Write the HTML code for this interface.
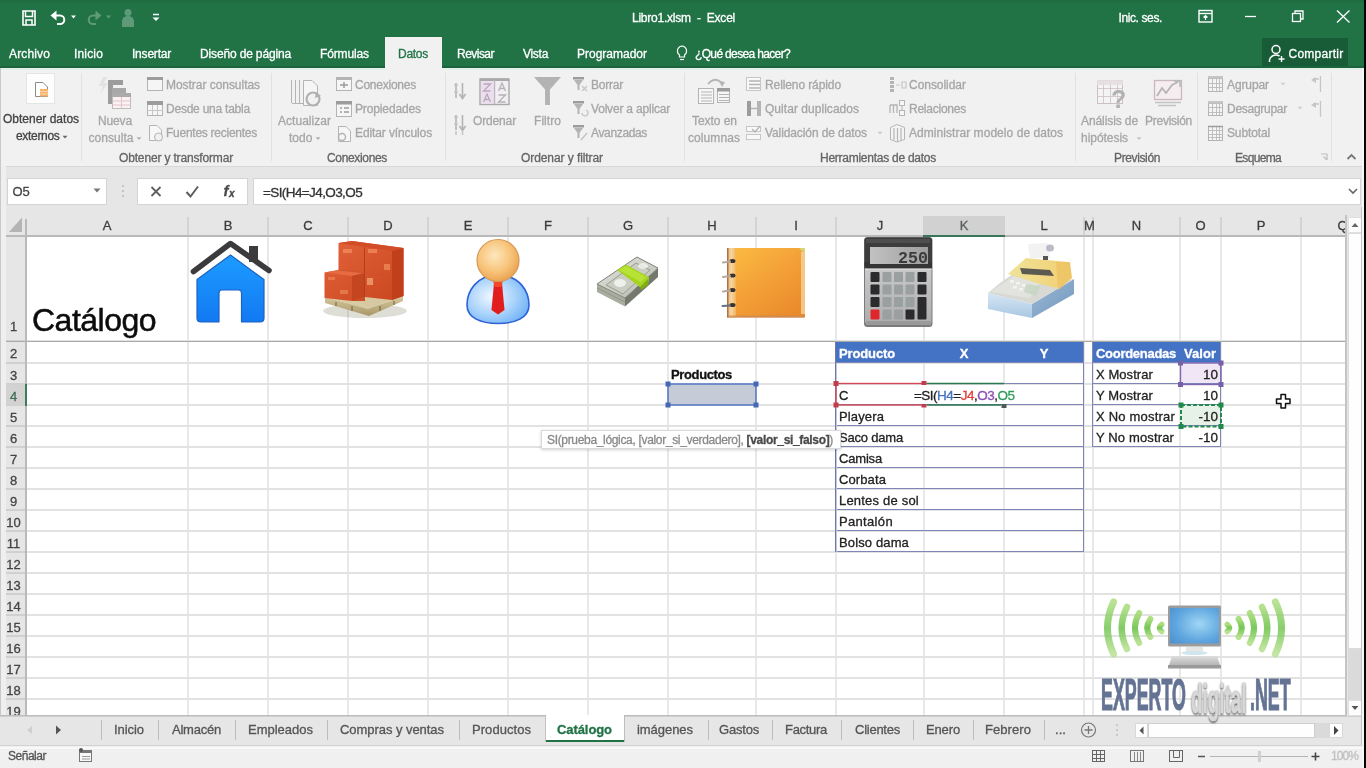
<!DOCTYPE html>
<html lang="es">
<head>
<meta charset="utf-8">
<title>Libro1.xlsm - Excel</title>
<style>
html,body{margin:0;padding:0;}
body{width:1366px;height:768px;overflow:hidden;background:#fff;position:relative;font-family:"Liberation Sans",sans-serif;}
#app{position:absolute;left:0;top:0;width:1366px;height:768px;overflow:hidden;will-change:transform;}
#app div{position:absolute;}
#app span.t{position:absolute;white-space:pre;-webkit-text-stroke:0.3px;line-height:20px;height:20px;}
#app svg{position:absolute;overflow:visible;}
</style>
</head>
<body>
<div id="app">
<div style="left:0px;top:0px;width:1366px;height:68px;background:#217346;"></div>
<div style="left:0px;top:0px;width:1366px;height:4px;background:linear-gradient(#1d6a3f,#217346);"></div>
<div style="left:385px;top:37px;width:57px;height:32px;background:#f1f1f1;"></div>
<div style="left:1262px;top:38px;width:86px;height:28px;background:#185c37;"></div>
<span class="t" style="font-size:12px;color:#fff;letter-spacing:-0.24px;top:7.6px;left:632.0px;">Libro1.xlsm  -  Excel</span>
<span class="t" style="font-size:12px;color:#fff;letter-spacing:-0.39px;top:7.6px;left:1118.5px;">Inic. ses.</span>
<span class="t" style="font-size:12px;color:#fff;letter-spacing:0.14px;top:44.1px;left:9.0px;">Archivo</span>
<span class="t" style="font-size:12px;color:#fff;letter-spacing:0.16px;top:44.1px;left:74.0px;">Inicio</span>
<span class="t" style="font-size:12px;color:#fff;letter-spacing:-0.21px;top:44.1px;left:132.0px;">Insertar</span>
<span class="t" style="font-size:12px;color:#fff;letter-spacing:-0.15px;top:44.1px;left:200.0px;">Diseño de página</span>
<span class="t" style="font-size:12px;color:#fff;letter-spacing:-0.13px;top:44.1px;left:320.0px;">Fórmulas</span>
<span class="t" style="font-size:12px;color:#217346;letter-spacing:-0.27px;top:44.1px;left:398.0px;">Datos</span>
<span class="t" style="font-size:12px;color:#fff;letter-spacing:-0.53px;top:44.1px;left:457.0px;">Revisar</span>
<span class="t" style="font-size:12px;color:#fff;letter-spacing:-0.29px;top:44.1px;left:523.0px;">Vista</span>
<span class="t" style="font-size:12px;color:#fff;letter-spacing:-0.00px;top:44.1px;left:577.0px;">Programador</span>
<span class="t" style="font-size:12px;color:#fff;letter-spacing:-0.65px;top:44.1px;left:695.0px;">¿Qué desea hacer?</span>
<span class="t" style="font-size:12px;color:#fff;letter-spacing:0.26px;top:44.1px;left:1288.5px;">Compartir</span>
<div style="left:0px;top:68px;width:1366px;height:98px;background:#f1f1f1;"></div>
<div style="left:0px;top:66px;width:1366px;height:2px;background:#1c653c;"></div>
<div style="left:385px;top:66px;width:57px;height:3px;background:#f1f1f1;"></div>
<div style="left:0px;top:68px;width:1366px;height:2px;background:#e4f1e8;"></div>
<div style="left:385px;top:68px;width:58px;height:2px;background:#f1f1f1;"></div>
<div style="left:0px;top:166px;width:1366px;height:1px;background:#d8d8d8;"></div>
<div style="left:81px;top:73px;width:1px;height:88px;background:#e1e1e1;"></div>
<div style="left:271px;top:73px;width:1px;height:88px;background:#e1e1e1;"></div>
<div style="left:445px;top:73px;width:1px;height:88px;background:#e1e1e1;"></div>
<div style="left:684px;top:73px;width:1px;height:88px;background:#e1e1e1;"></div>
<div style="left:1075px;top:73px;width:1px;height:88px;background:#e1e1e1;"></div>
<div style="left:1197px;top:73px;width:1px;height:88px;background:#e1e1e1;"></div>
<div style="left:1331px;top:73px;width:1px;height:88px;background:#e1e1e1;"></div>
<span class="t" style="font-size:12px;color:#444;letter-spacing:-0.00px;top:109.1px;left:3.0px;">Obtener datos</span>
<span class="t" style="font-size:12px;color:#444;letter-spacing:-0.32px;top:126.1px;left:16.0px;">externos</span>
<span class="t" style="font-size:12px;color:#a6a6a6;letter-spacing:-0.14px;top:111.1px;left:98.0px;">Nueva</span>
<span class="t" style="font-size:12px;color:#a6a6a6;letter-spacing:0.04px;top:128.1px;left:88.5px;">consulta</span>
<span class="t" style="font-size:12px;color:#a6a6a6;letter-spacing:0.03px;top:111.1px;left:278.0px;">Actualizar</span>
<span class="t" style="font-size:12px;color:#a6a6a6;letter-spacing:0.04px;top:128.1px;left:289.0px;">todo</span>
<span class="t" style="font-size:12px;color:#a6a6a6;letter-spacing:-0.15px;top:111.1px;left:473.0px;">Ordenar</span>
<span class="t" style="font-size:12px;color:#a6a6a6;letter-spacing:0.05px;top:111.1px;left:534.0px;">Filtro</span>
<span class="t" style="font-size:12px;color:#a6a6a6;letter-spacing:-0.05px;top:111.1px;left:692.0px;">Texto en</span>
<span class="t" style="font-size:12px;color:#a6a6a6;letter-spacing:0.08px;top:128.1px;left:688.0px;">columnas</span>
<span class="t" style="font-size:12px;color:#a6a6a6;letter-spacing:-0.09px;top:111.1px;left:1081.0px;">Análisis de</span>
<span class="t" style="font-size:12px;color:#a6a6a6;letter-spacing:-0.04px;top:128.1px;left:1081.0px;">hipótesis</span>
<span class="t" style="font-size:12px;color:#a6a6a6;letter-spacing:-0.26px;top:111.1px;left:1145.0px;">Previsión</span>
<span class="t" style="font-size:12px;color:#a6a6a6;letter-spacing:-0.04px;top:75.1px;left:166.0px;">Mostrar consultas</span>
<span class="t" style="font-size:12px;color:#a6a6a6;letter-spacing:-0.23px;top:99.1px;left:166.0px;">Desde una tabla</span>
<span class="t" style="font-size:12px;color:#a6a6a6;letter-spacing:-0.26px;top:123.1px;left:166.0px;">Fuentes recientes</span>
<span class="t" style="font-size:12px;color:#a6a6a6;letter-spacing:-0.24px;top:75.1px;left:355.0px;">Conexiones</span>
<span class="t" style="font-size:12px;color:#a6a6a6;letter-spacing:-0.13px;top:99.1px;left:355.0px;">Propiedades</span>
<span class="t" style="font-size:12px;color:#a6a6a6;letter-spacing:-0.11px;top:123.1px;left:355.0px;">Editar vínculos</span>
<span class="t" style="font-size:12px;color:#a6a6a6;letter-spacing:-0.22px;top:75.1px;left:591.0px;">Borrar</span>
<span class="t" style="font-size:12px;color:#a6a6a6;letter-spacing:-0.19px;top:99.1px;left:591.0px;">Volver a aplicar</span>
<span class="t" style="font-size:12px;color:#a6a6a6;letter-spacing:-0.35px;top:123.1px;left:591.0px;">Avanzadas</span>
<span class="t" style="font-size:12px;color:#a6a6a6;letter-spacing:-0.10px;top:75.1px;left:765.0px;">Relleno rápido</span>
<span class="t" style="font-size:12px;color:#a6a6a6;letter-spacing:0.04px;top:99.1px;left:765.0px;">Quitar duplicados</span>
<span class="t" style="font-size:12px;color:#a6a6a6;letter-spacing:-0.10px;top:123.1px;left:765.0px;">Validación de datos</span>
<span class="t" style="font-size:12px;color:#a6a6a6;letter-spacing:-0.04px;top:75.1px;left:909.0px;">Consolidar</span>
<span class="t" style="font-size:12px;color:#a6a6a6;letter-spacing:-0.24px;top:99.1px;left:909.0px;">Relaciones</span>
<span class="t" style="font-size:12px;color:#a6a6a6;letter-spacing:0.05px;top:123.1px;left:909.0px;">Administrar modelo de datos</span>
<span class="t" style="font-size:12px;color:#a6a6a6;letter-spacing:-0.10px;top:75.1px;left:1227.0px;">Agrupar</span>
<span class="t" style="font-size:12px;color:#a6a6a6;letter-spacing:-0.27px;top:99.1px;left:1227.0px;">Desagrupar</span>
<span class="t" style="font-size:12px;color:#a6a6a6;letter-spacing:-0.13px;top:123.1px;left:1227.0px;">Subtotal</span>
<span class="t" style="font-size:12px;color:#646464;letter-spacing:-0.16px;top:147.6px;left:119.0px;">Obtener y transformar</span>
<span class="t" style="font-size:12px;color:#646464;letter-spacing:-0.34px;top:147.6px;left:327.0px;">Conexiones</span>
<span class="t" style="font-size:12px;color:#646464;letter-spacing:-0.08px;top:147.6px;left:521.0px;">Ordenar y filtrar</span>
<span class="t" style="font-size:12px;color:#646464;letter-spacing:-0.26px;top:147.6px;left:820.0px;">Herramientas de datos</span>
<span class="t" style="font-size:12px;color:#646464;letter-spacing:-0.37px;top:147.6px;left:1114.0px;">Previsión</span>
<span class="t" style="font-size:12px;color:#646464;letter-spacing:-0.67px;top:147.6px;left:1235.0px;">Esquema</span>
<div style="left:0px;top:167px;width:1366px;height:48px;background:#e6e6e6;"></div>
<div style="left:7px;top:178px;width:100px;height:27px;background:#fff;box-sizing:border-box;border:1px solid #d4d4d4;"></div>
<div style="left:137px;top:178px;width:111px;height:27px;background:#fff;box-sizing:border-box;border:1px solid #d4d4d4;"></div>
<div style="left:253px;top:178px;width:1108px;height:27px;background:#fff;box-sizing:border-box;border:1px solid #d4d4d4;"></div>
<span class="t" style="font-size:13px;color:#444;letter-spacing:-0.17px;top:182.1px;left:12.5px;">O5</span>
<span class="t" style="font-size:13.5px;color:#333;letter-spacing:-0.60px;top:182.5px;left:263.0px;">=SI(H4=J4,O3,O5</span>
<div style="left:0px;top:215px;width:1366px;height:501px;background:#fff;"></div>
<div style="left:0px;top:206px;width:1366px;height:30px;background:#e6e6e6;"></div>
<div style="left:0px;top:236px;width:26px;height:480px;background:#e6e6e6;"></div>
<div style="left:187px;top:237px;width:2px;height:479px;background:#e8e8e8;"></div>
<div style="left:187px;top:217px;width:2px;height:18px;background:#d3d3d3;"></div>
<div style="left:267px;top:237px;width:2px;height:479px;background:#e8e8e8;"></div>
<div style="left:267px;top:217px;width:2px;height:18px;background:#d3d3d3;"></div>
<div style="left:347px;top:237px;width:2px;height:479px;background:#e8e8e8;"></div>
<div style="left:347px;top:217px;width:2px;height:18px;background:#d3d3d3;"></div>
<div style="left:427px;top:237px;width:2px;height:479px;background:#e8e8e8;"></div>
<div style="left:427px;top:217px;width:2px;height:18px;background:#d3d3d3;"></div>
<div style="left:507px;top:237px;width:2px;height:479px;background:#e8e8e8;"></div>
<div style="left:507px;top:217px;width:2px;height:18px;background:#d3d3d3;"></div>
<div style="left:587px;top:237px;width:2px;height:479px;background:#e8e8e8;"></div>
<div style="left:587px;top:217px;width:2px;height:18px;background:#d3d3d3;"></div>
<div style="left:667px;top:237px;width:2px;height:479px;background:#e8e8e8;"></div>
<div style="left:667px;top:217px;width:2px;height:18px;background:#d3d3d3;"></div>
<div style="left:755px;top:237px;width:2px;height:479px;background:#e8e8e8;"></div>
<div style="left:755px;top:217px;width:2px;height:18px;background:#d3d3d3;"></div>
<div style="left:835px;top:237px;width:2px;height:479px;background:#e8e8e8;"></div>
<div style="left:835px;top:217px;width:2px;height:18px;background:#d3d3d3;"></div>
<div style="left:923px;top:237px;width:2px;height:479px;background:#e8e8e8;"></div>
<div style="left:923px;top:217px;width:2px;height:18px;background:#d3d3d3;"></div>
<div style="left:1003px;top:237px;width:2px;height:479px;background:#e8e8e8;"></div>
<div style="left:1003px;top:217px;width:2px;height:18px;background:#d3d3d3;"></div>
<div style="left:1083px;top:237px;width:2px;height:479px;background:#e8e8e8;"></div>
<div style="left:1083px;top:217px;width:2px;height:18px;background:#d3d3d3;"></div>
<div style="left:1092px;top:237px;width:2px;height:479px;background:#e8e8e8;"></div>
<div style="left:1092px;top:217px;width:2px;height:18px;background:#d3d3d3;"></div>
<div style="left:1179px;top:237px;width:2px;height:479px;background:#e8e8e8;"></div>
<div style="left:1179px;top:217px;width:2px;height:18px;background:#d3d3d3;"></div>
<div style="left:1220px;top:237px;width:2px;height:479px;background:#e8e8e8;"></div>
<div style="left:1220px;top:217px;width:2px;height:18px;background:#d3d3d3;"></div>
<div style="left:1300px;top:237px;width:2px;height:479px;background:#e8e8e8;"></div>
<div style="left:1300px;top:217px;width:2px;height:18px;background:#d3d3d3;"></div>
<div style="left:27px;top:340px;width:1318px;height:2px;background:#e2e2e2;"></div>
<div style="left:6px;top:340px;width:20px;height:2px;background:#d0d0d0;"></div>
<div style="left:27px;top:362px;width:1318px;height:2px;background:#e2e2e2;"></div>
<div style="left:6px;top:362px;width:20px;height:2px;background:#d0d0d0;"></div>
<div style="left:27px;top:383px;width:1318px;height:2px;background:#e2e2e2;"></div>
<div style="left:6px;top:383px;width:20px;height:2px;background:#d0d0d0;"></div>
<div style="left:27px;top:404px;width:1318px;height:2px;background:#e2e2e2;"></div>
<div style="left:6px;top:404px;width:20px;height:2px;background:#d0d0d0;"></div>
<div style="left:27px;top:425px;width:1318px;height:2px;background:#e2e2e2;"></div>
<div style="left:6px;top:425px;width:20px;height:2px;background:#d0d0d0;"></div>
<div style="left:27px;top:446px;width:1318px;height:2px;background:#e2e2e2;"></div>
<div style="left:6px;top:446px;width:20px;height:2px;background:#d0d0d0;"></div>
<div style="left:27px;top:467px;width:1318px;height:2px;background:#e2e2e2;"></div>
<div style="left:6px;top:467px;width:20px;height:2px;background:#d0d0d0;"></div>
<div style="left:27px;top:488px;width:1318px;height:2px;background:#e2e2e2;"></div>
<div style="left:6px;top:488px;width:20px;height:2px;background:#d0d0d0;"></div>
<div style="left:27px;top:509px;width:1318px;height:2px;background:#e2e2e2;"></div>
<div style="left:6px;top:509px;width:20px;height:2px;background:#d0d0d0;"></div>
<div style="left:27px;top:530px;width:1318px;height:2px;background:#e2e2e2;"></div>
<div style="left:6px;top:530px;width:20px;height:2px;background:#d0d0d0;"></div>
<div style="left:27px;top:551px;width:1318px;height:2px;background:#e2e2e2;"></div>
<div style="left:6px;top:551px;width:20px;height:2px;background:#d0d0d0;"></div>
<div style="left:27px;top:572px;width:1318px;height:2px;background:#e2e2e2;"></div>
<div style="left:6px;top:572px;width:20px;height:2px;background:#d0d0d0;"></div>
<div style="left:27px;top:593px;width:1318px;height:2px;background:#e2e2e2;"></div>
<div style="left:6px;top:593px;width:20px;height:2px;background:#d0d0d0;"></div>
<div style="left:27px;top:614px;width:1318px;height:2px;background:#e2e2e2;"></div>
<div style="left:6px;top:614px;width:20px;height:2px;background:#d0d0d0;"></div>
<div style="left:27px;top:635px;width:1318px;height:2px;background:#e2e2e2;"></div>
<div style="left:6px;top:635px;width:20px;height:2px;background:#d0d0d0;"></div>
<div style="left:27px;top:656px;width:1318px;height:2px;background:#e2e2e2;"></div>
<div style="left:6px;top:656px;width:20px;height:2px;background:#d0d0d0;"></div>
<div style="left:27px;top:677px;width:1318px;height:2px;background:#e2e2e2;"></div>
<div style="left:6px;top:677px;width:20px;height:2px;background:#d0d0d0;"></div>
<div style="left:27px;top:698px;width:1318px;height:2px;background:#e2e2e2;"></div>
<div style="left:6px;top:698px;width:20px;height:2px;background:#d0d0d0;"></div>
<div style="left:2px;top:341px;width:1343px;height:1px;background:#a9a9a9;"></div>
<div style="left:6px;top:235px;width:1340px;height:2px;background:#b9b9b9;"></div>
<div style="left:25px;top:219px;width:2px;height:497px;background:#b9b9b9;"></div>
<div style="left:923px;top:216px;width:82px;height:19px;background:#d1d1d1;"></div>
<div style="left:923px;top:235px;width:82px;height:2px;background:#3a7558;"></div>
<div style="left:6px;top:385px;width:19px;height:20px;background:#d2d2d2;"></div>
<div style="left:25px;top:384px;width:2px;height:22px;background:#3c7d5c;"></div>
<div style="left:0px;top:68px;width:1px;height:700px;background:#c9c9c9;"></div>
<div style="left:1px;top:166px;width:5px;height:602px;background:#efefef;"></div>
<span class="t" style="font-size:13px;color:#3c3c3c;top:216.1px;left:102.7px;">A</span>
<span class="t" style="font-size:13px;color:#3c3c3c;top:216.1px;left:223.7px;">B</span>
<span class="t" style="font-size:13px;color:#3c3c3c;top:216.1px;left:303.3px;">C</span>
<span class="t" style="font-size:13px;color:#3c3c3c;top:216.1px;left:383.3px;">D</span>
<span class="t" style="font-size:13px;color:#3c3c3c;top:216.1px;left:463.7px;">E</span>
<span class="t" style="font-size:13px;color:#3c3c3c;top:216.1px;left:544.0px;">F</span>
<span class="t" style="font-size:13px;color:#3c3c3c;top:216.1px;left:622.9px;">G</span>
<span class="t" style="font-size:13px;color:#3c3c3c;top:216.1px;left:707.3px;">H</span>
<span class="t" style="font-size:13px;color:#3c3c3c;top:216.1px;left:794.2px;">I</span>
<span class="t" style="font-size:13px;color:#3c3c3c;top:216.1px;left:876.8px;">J</span>
<span class="t" style="font-size:13px;color:#5a5f5c;top:216.1px;left:959.7px;">K</span>
<span class="t" style="font-size:13px;color:#3c3c3c;top:216.1px;left:1040.4px;">L</span>
<span class="t" style="font-size:13px;color:#444;top:216.1px;left:1084.0px;">M</span>
<span class="t" style="font-size:13px;color:#3c3c3c;top:216.1px;left:1131.8px;">N</span>
<span class="t" style="font-size:13px;color:#3c3c3c;top:216.1px;left:1195.4px;">O</span>
<span class="t" style="font-size:13px;color:#3c3c3c;top:216.1px;left:1256.7px;">P</span>
<span class="t" style="font-size:13px;color:#3c3c3c;top:216.1px;left:1337.5px;">Q</span>
<span class="t" style="font-size:13px;color:#444;top:317.1px;left:9.9px;">1</span>
<span class="t" style="font-size:13px;color:#444;top:343.6px;left:9.9px;">2</span>
<span class="t" style="font-size:13px;color:#444;top:365.6px;left:9.9px;">3</span>
<span class="t" style="font-size:13px;color:#3f6b55;top:386.6px;left:9.9px;">4</span>
<span class="t" style="font-size:13px;color:#444;top:407.6px;left:9.9px;">5</span>
<span class="t" style="font-size:13px;color:#444;top:428.6px;left:9.9px;">6</span>
<span class="t" style="font-size:13px;color:#444;top:449.6px;left:9.9px;">7</span>
<span class="t" style="font-size:13px;color:#444;top:470.6px;left:9.9px;">8</span>
<span class="t" style="font-size:13px;color:#444;top:491.6px;left:9.9px;">9</span>
<span class="t" style="font-size:13px;color:#444;top:512.6px;left:6.3px;">10</span>
<span class="t" style="font-size:13px;color:#444;top:533.6px;left:6.8px;">11</span>
<span class="t" style="font-size:13px;color:#444;top:554.6px;left:6.3px;">12</span>
<span class="t" style="font-size:13px;color:#444;top:575.6px;left:6.3px;">13</span>
<span class="t" style="font-size:13px;color:#444;top:596.6px;left:6.3px;">14</span>
<span class="t" style="font-size:13px;color:#444;top:617.6px;left:6.3px;">15</span>
<span class="t" style="font-size:13px;color:#444;top:638.6px;left:6.3px;">16</span>
<span class="t" style="font-size:13px;color:#444;top:659.6px;left:6.3px;">17</span>
<span class="t" style="font-size:13px;color:#444;top:680.6px;left:6.3px;">18</span>
<span class="t" style="font-size:13px;color:#444;top:701.6px;left:6.3px;">19</span>
<div style="left:668px;top:384px;width:88px;height:21px;background:#c6cbd8;"></div>
<div style="left:1180px;top:363px;width:41px;height:21px;background:#f0e6f5;"></div>
<div style="left:1180px;top:405px;width:41px;height:21px;background:#e6f1e8;"></div>
<div style="left:836px;top:342px;width:248px;height:21px;background:#4472c4;"></div>
<div style="left:1093px;top:342px;width:128px;height:21px;background:#4472c4;"></div>
<div style="left:836px;top:362px;width:248px;height:1px;background:#7e86b8;"></div>
<div style="left:836px;top:383px;width:248px;height:1px;background:#7e86b8;"></div>
<div style="left:836px;top:404px;width:248px;height:1px;background:#7e86b8;"></div>
<div style="left:836px;top:425px;width:248px;height:1px;background:#7e86b8;"></div>
<div style="left:836px;top:446px;width:248px;height:1px;background:#7e86b8;"></div>
<div style="left:836px;top:467px;width:248px;height:1px;background:#7e86b8;"></div>
<div style="left:836px;top:488px;width:248px;height:1px;background:#7e86b8;"></div>
<div style="left:836px;top:509px;width:248px;height:1px;background:#7e86b8;"></div>
<div style="left:836px;top:530px;width:248px;height:1px;background:#7e86b8;"></div>
<div style="left:836px;top:551px;width:248px;height:1px;background:#7e86b8;"></div>
<div style="left:835px;top:342px;width:1px;height:210px;background:#6f78a6;"></div>
<div style="left:836px;top:363px;width:1px;height:189px;background:#c3c7de;"></div>
<div style="left:1083px;top:342px;width:1px;height:210px;background:#7e86b8;"></div>
<div style="left:1093px;top:362px;width:128px;height:1px;background:#7e86b8;"></div>
<div style="left:1093px;top:383px;width:128px;height:1px;background:#7e86b8;"></div>
<div style="left:1093px;top:404px;width:128px;height:1px;background:#7e86b8;"></div>
<div style="left:1093px;top:425px;width:128px;height:1px;background:#7e86b8;"></div>
<div style="left:1093px;top:446px;width:128px;height:1px;background:#7e86b8;"></div>
<div style="left:1092px;top:342px;width:1px;height:105px;background:#7e86b8;"></div>
<div style="left:1220px;top:342px;width:1px;height:105px;background:#7e86b8;"></div>
<svg width="1366" height="768" viewBox="0 0 1366 768" style="left:0;top:0;"><rect x="668" y="384" width="88" height="21" fill="none" stroke="#4a6fc0" stroke-width="1.400"/><rect x="665.5" y="381.5" width="5" height="5" fill="#4468b4"/><rect x="753.5" y="381.5" width="5" height="5" fill="#4468b4"/><rect x="665.5" y="402.5" width="5" height="5" fill="#4468b4"/><rect x="753.5" y="402.5" width="5" height="5" fill="#4468b4"/><rect x="836" y="383.500" width="88" height="21.500" fill="none" stroke="#d24a5a" stroke-width="1.400"/><rect x="833.5" y="381.0" width="5" height="5" fill="#c23c4c"/><rect x="921.5" y="381.0" width="5" height="5" fill="#c23c4c"/><rect x="833.5" y="402.5" width="5" height="5" fill="#c23c4c"/><rect x="921.5" y="402.5" width="5" height="5" fill="#c23c4c"/><path d="M927 383.500 H1004 M927 405 H1001" stroke="#2c7a52" stroke-width="1.500"/><rect x="1001.5" y="403.0" width="5" height="5" fill="#4a5a56"/><rect x="1180.500" y="363" width="40.500" height="21.500" fill="none" stroke="#7f68b0" stroke-width="1.400"/><rect x="1178.0" y="360.5" width="5" height="5" fill="#7660a8"/><rect x="1218.5" y="360.5" width="5" height="5" fill="#7660a8"/><rect x="1178.0" y="382.0" width="5" height="5" fill="#7660a8"/><rect x="1218.5" y="382.0" width="5" height="5" fill="#7660a8"/><rect x="1181" y="405" width="40" height="21.500" fill="none" stroke="#1f8a4c" stroke-width="2" stroke-dasharray="4 2"/><rect x="1178.5" y="402.5" width="5" height="5" fill="#1f8a4c"/><rect x="1218.5" y="402.5" width="5" height="5" fill="#1f8a4c"/><rect x="1178.5" y="424.0" width="5" height="5" fill="#1f8a4c"/><rect x="1218.5" y="424.0" width="5" height="5" fill="#1f8a4c"/></svg>
<div style="left:911px;top:385px;width:106px;height:19px;background:#fff;"></div>
<span class="t" style="font-size:13px;color:#fff;font-weight:700;letter-spacing:-0.13px;top:343.6px;left:839.0px;">Producto</span>
<span class="t" style="font-size:13px;color:#fff;font-weight:700;top:343.6px;left:959.7px;">X</span>
<span class="t" style="font-size:13px;color:#fff;font-weight:700;top:343.6px;left:1039.7px;">Y</span>
<span class="t" style="font-size:13px;color:#fff;font-weight:700;letter-spacing:-0.28px;top:343.6px;left:1096.0px;">Coordenadas</span>
<span class="t" style="font-size:13px;color:#fff;font-weight:700;letter-spacing:0.04px;top:343.6px;left:1184.0px;">Valor</span>
<span class="t" style="font-size:13px;color:#222;letter-spacing:-1.20px;top:385.6px;left:839.0px;">C</span>
<span class="t" style="font-size:13px;color:#222;letter-spacing:0.13px;top:406.6px;left:839.0px;">Playera</span>
<span class="t" style="font-size:13px;color:#222;letter-spacing:-0.20px;top:427.6px;left:839.0px;">Saco dama</span>
<span class="t" style="font-size:13px;color:#222;letter-spacing:-0.18px;top:448.6px;left:839.0px;">Camisa</span>
<span class="t" style="font-size:13px;color:#222;letter-spacing:0.11px;top:469.6px;left:839.0px;">Corbata</span>
<span class="t" style="font-size:13px;color:#222;letter-spacing:0.20px;top:490.6px;left:839.0px;">Lentes de sol</span>
<span class="t" style="font-size:13px;color:#222;letter-spacing:0.33px;top:511.6px;left:839.0px;">Pantalón</span>
<span class="t" style="font-size:13px;color:#222;letter-spacing:0.13px;top:532.6px;left:839.0px;">Bolso dama</span>
<span class="t" style="font-size:13px;color:#222;letter-spacing:0.07px;top:364.6px;left:1096.0px;">X Mostrar</span>
<span class="t" style="font-size:13px;color:#222;letter-spacing:0.10px;top:385.6px;left:1096.0px;">Y Mostrar</span>
<span class="t" style="font-size:13px;color:#222;letter-spacing:0.20px;top:406.6px;left:1096.0px;">X No mostrar</span>
<span class="t" style="font-size:13px;color:#222;letter-spacing:0.14px;top:427.6px;left:1096.0px;">Y No mostrar</span>
<span class="t" style="font-size:13.5px;color:#222;top:364.7px;left:1203.0px;">10</span>
<span class="t" style="font-size:13.5px;color:#222;top:385.7px;left:1203.0px;">10</span>
<span class="t" style="font-size:13.5px;color:#222;top:406.7px;left:1198.5px;">-10</span>
<span class="t" style="font-size:13.5px;color:#222;top:427.7px;left:1198.5px;">-10</span>
<span class="t" style="font-size:13px;color:#111;font-weight:700;letter-spacing:-0.37px;top:364.6px;left:671.0px;">Productos</span>
<span class="t" style="font-size:32px;color:#0c0c0c;letter-spacing:-0.51px;top:310.4px;left:32.0px;-webkit-text-stroke:0.5px #0c0c0c;">Catálogo</span>
<span class="t" style="font-size:13.5px;color:#222;letter-spacing:-0.51px;top:386.2px;left:914.0px;">=SI(<span style="color:#4472c4">H4</span>=<span style="color:#e0403a">J4</span>,<span style="color:#8e4fb0">O3</span>,<span style="color:#2e9a5c">O5</span></span>
<div style="left:541px;top:430px;width:300px;height:19px;background:#fff;box-sizing:border-box;border:1px solid #dadada;box-shadow:0 1px 3px rgba(0,0,0,.18);"></div>
<span class="t" style="font-size:12px;color:#8a8a8a;letter-spacing:-0.33px;top:429.6px;left:547.0px;">SI(prueba_lógica, [valor_si_verdadero], <b style="color:#4a4a4a">[valor_si_falso]</b>)</span>
<div style="left:0px;top:716px;width:1366px;height:29px;background:#e6e6e6;"></div>
<div style="left:0px;top:715px;width:1366px;height:1px;background:#bcbcbc;"></div>
<div style="left:0px;top:716px;width:1366px;height:1px;background:#cfcfcf;"></div>
<div style="left:546px;top:715px;width:78px;height:27px;background:#fff;"></div>
<div style="left:545px;top:716px;width:1px;height:26px;background:#c2c2c2;"></div>
<div style="left:624px;top:716px;width:1px;height:26px;background:#bdbdbd;"></div>
<div style="left:546px;top:740px;width:78px;height:2px;background:#217346;"></div>
<span class="t" style="font-size:13px;color:#555;letter-spacing:-0.06px;top:720.1px;left:114.0px;">Inicio</span>
<span class="t" style="font-size:13px;color:#555;letter-spacing:-0.23px;top:720.1px;left:172.0px;">Almacén</span>
<span class="t" style="font-size:13px;color:#555;letter-spacing:-0.01px;top:720.1px;left:248.0px;">Empleados</span>
<span class="t" style="font-size:13px;color:#555;letter-spacing:-0.05px;top:720.1px;left:340.0px;">Compras y ventas</span>
<span class="t" style="font-size:13px;color:#555;letter-spacing:0.05px;top:720.1px;left:472.0px;">Productos</span>
<span class="t" style="font-size:13px;color:#555;letter-spacing:-0.05px;top:720.1px;left:637.0px;">imágenes</span>
<span class="t" style="font-size:13px;color:#555;letter-spacing:-0.20px;top:720.1px;left:719.0px;">Gastos</span>
<span class="t" style="font-size:13px;color:#555;letter-spacing:-0.30px;top:720.1px;left:785.0px;">Factura</span>
<span class="t" style="font-size:13px;color:#555;letter-spacing:-0.25px;top:720.1px;left:855.0px;">Clientes</span>
<span class="t" style="font-size:13px;color:#555;letter-spacing:-0.14px;top:720.1px;left:926.0px;">Enero</span>
<span class="t" style="font-size:13px;color:#555;letter-spacing:0.07px;top:720.1px;left:985.0px;">Febrero</span>
<span class="t" style="font-size:13px;color:#555;letter-spacing:0.05px;top:720.1px;left:1055.0px;">...</span>
<span class="t" style="font-size:13px;color:#217346;font-weight:700;letter-spacing:-0.08px;top:720.1px;left:557.0px;">Catálogo</span>
<div style="left:101px;top:720px;width:1px;height:20px;background:#bcbcbc;"></div>
<div style="left:158px;top:720px;width:1px;height:20px;background:#bcbcbc;"></div>
<div style="left:235px;top:720px;width:1px;height:20px;background:#bcbcbc;"></div>
<div style="left:327px;top:720px;width:1px;height:20px;background:#bcbcbc;"></div>
<div style="left:459px;top:720px;width:1px;height:20px;background:#bcbcbc;"></div>
<div style="left:708px;top:720px;width:1px;height:20px;background:#bcbcbc;"></div>
<div style="left:772px;top:720px;width:1px;height:20px;background:#bcbcbc;"></div>
<div style="left:841px;top:720px;width:1px;height:20px;background:#bcbcbc;"></div>
<div style="left:913px;top:720px;width:1px;height:20px;background:#bcbcbc;"></div>
<div style="left:973px;top:720px;width:1px;height:20px;background:#bcbcbc;"></div>
<div style="left:1044px;top:720px;width:1px;height:20px;background:#bcbcbc;"></div>
<div style="left:0px;top:745px;width:1366px;height:23px;background:#f0f0f0;"></div>
<div style="left:0px;top:745px;width:1366px;height:1px;background:#d2d2d2;"></div>
<div style="left:0px;top:747px;width:1366px;height:2px;background:#f8f8f8;"></div>
<span class="t" style="font-size:12px;color:#555;letter-spacing:-0.48px;top:746.1px;left:8.0px;">Señalar</span>
<span class="t" style="font-size:12px;color:#c0c0c0;letter-spacing:-0.93px;top:746.1px;left:1331.0px;">100%</span>
<div style="left:1345px;top:207px;width:21px;height:509px;background:#e6e6e6;"></div>
<div style="left:1345px;top:215px;width:2px;height:501px;background:#c4c4c4;"></div>
<div style="left:1348px;top:217px;width:14px;height:16px;background:#fdfdfd;box-sizing:border-box;border:1px solid #e0e0e0;"></div>
<div style="left:1348px;top:233px;width:14px;height:416px;background:#fefefe;box-sizing:border-box;border:1px solid #dcdcdc;"></div>
<div style="left:1348px;top:649px;width:14px;height:51px;background:#dadada;"></div>
<div style="left:1348px;top:700px;width:14px;height:16px;background:#fdfdfd;box-sizing:border-box;border:1px solid #e0e0e0;"></div>
<div style="left:1135px;top:723px;width:13px;height:15px;background:#fdfdfd;box-sizing:border-box;border:1px solid #d8d8d8;"></div>
<div style="left:1148px;top:723px;width:167px;height:15px;background:#fefefe;box-sizing:border-box;border:1px solid #cfcfcf;"></div>
<div style="left:1315px;top:723px;width:14px;height:15px;background:#dadada;"></div>
<div style="left:1329px;top:723px;width:14px;height:15px;background:#fdfdfd;box-sizing:border-box;border:1px solid #d8d8d8;"></div>
<div style="left:1361px;top:207px;width:1px;height:538px;background:#c4c4c4;"></div>
<div style="left:1362px;top:68px;width:2px;height:700px;background:#f6f6f6;"></div>
<div style="left:1364px;top:0px;width:2px;height:768px;background:#050505;"></div>
<svg width="1366" height="768" viewBox="0 0 1366 768" style="left:0;top:0;">
<g>
 <defs><linearGradient id="hb" x1="0" y1="0" x2="0" y2="1"><stop offset="0" stop-color="#1c9cff"/><stop offset="1" stop-color="#1279f2"/></linearGradient></defs>
 <path d="M230.5 255 L264 279.5 L264 318 Q264 322 260 322 L241.5 322 L241.5 293 Q241.5 290 238.5 290 L222 290 Q219 290 219 293 L219 322 L201 322 Q197 322 197 318 L197 279.5 Z" fill="url(#hb)" stroke="#1f63c0" stroke-width="1.2" stroke-linejoin="round"/>
 <path d="M249 262 L249 246 L258 246 L258 262 Z" fill="#3b3b3d"/>
 <path d="M193.5 271.5 L230.5 243.5 L269 270.5" fill="none" stroke="#3b3b3d" stroke-width="5.6" stroke-linecap="round" stroke-linejoin="round"/>
</g>
<g>
 <defs>
  <linearGradient id="bx1" x1="0" y1="0" x2="1" y2="1"><stop offset="0" stop-color="#e4633a"/><stop offset="1" stop-color="#c9461f"/></linearGradient>
  <linearGradient id="bx2" x1="0" y1="0" x2="0" y2="1"><stop offset="0" stop-color="#e0552c"/><stop offset="1" stop-color="#d9502a"/></linearGradient>
  <linearGradient id="pal" x1="0" y1="0" x2="0" y2="1"><stop offset="0" stop-color="#d8c9a0"/><stop offset="1" stop-color="#a89868"/></linearGradient>
 </defs>
 <ellipse cx="365" cy="311" rx="42" ry="7" fill="#7a7a5a" opacity=".25"/>
 <path d="M325 297 L366 285 L403 296 L368 309 Z" fill="#d9cba2"/>
 <path d="M325 297 L368 309 L403 296 L403 301 L369 316 L325 303 Z" fill="url(#pal)"/>
 <path d="M336 302 L336 306 M352 306 L352 311 M380 306 L380 311 M394 301 L394 305" stroke="#7c6c46" stroke-width="2" opacity=".6"/>
 <path d="M352 300 L366 297 L392 299 L370 307 Z" fill="#d6c8a0"/>
 <path d="M338.5 243 L352 241 L403.5 248 L403.5 296 L392 300 L365 297 L365 301 L352 301 L324.5 298 L324.5 272.5 L338.5 270 Z" fill="url(#bx1)"/>
 <path d="M338.5 243 L352 241 L403.5 248 L392 251 Z" fill="#d24c26"/>
 <path d="M392 251 L403.5 248 L403.5 296 L392 300 Z" fill="#c13f1b"/>
 <path d="M324.5 272.5 L338.5 270 L364.5 273 L352 276 Z" fill="#e66a42"/>
 <path d="M352 276 L364.5 273 L364.5 297 L352 301 Z" fill="#c44620"/>
 <path d="M364.5 247 L364.5 297" stroke="#b43c1a" stroke-width="1"/>
 <path d="M338.5 270 L392 276" stroke="#c8502c" stroke-width="1" opacity=".7"/>
 <rect x="343" y="249" width="9" height="4" fill="#f08a5c" opacity=".8"/>
 <rect x="368" y="249" width="9" height="4" fill="#f08a5c" opacity=".8"/>
 <rect x="367" y="278" width="6" height="7" fill="#f0a070" opacity=".8"/>
 <rect x="384" y="264" width="6" height="6" fill="#f09060" opacity=".7"/>
 <rect x="340" y="290" width="8" height="4" fill="#f09060" opacity=".6"/>
 <rect x="328" y="277" width="7" height="3" fill="#f08a5c" opacity=".6"/>
</g>
<g>
 <defs>
  <radialGradient id="hd" cx=".42" cy=".38" r=".7"><stop offset="0" stop-color="#fde7bd"/><stop offset=".55" stop-color="#f8c47a"/><stop offset="1" stop-color="#e79a45"/></radialGradient>
  <radialGradient id="bd" cx=".4" cy=".45" r=".75"><stop offset="0" stop-color="#f3f8ff"/><stop offset=".5" stop-color="#a9d3fb"/><stop offset="1" stop-color="#5aa6f5"/></radialGradient>
 </defs>
 <path d="M498 275 C 520 275 529 292 529 305 C 529 318 515 323.5 498 323.5 C 481 323.5 467 318 467 305 C 467 292 476 275 498 275 Z" fill="url(#bd)" stroke="#2f62d6" stroke-width="1.6"/>
 <path d="M494 283 L502 283 L504.5 310 L498 314.5 L491.5 310 Z" fill="#e21d1d"/>
 <path d="M493 281 L503 281 L501 287 L495 287 Z" fill="#f04a2a"/>
 <circle cx="498" cy="260.5" r="21" fill="url(#hd)" stroke="#d49a5a" stroke-width="1.2"/>
</g>
<g>
 <defs>
  <linearGradient id="mn" x1="0" y1="0" x2="1" y2="1"><stop offset="0" stop-color="#e4e6e0"/><stop offset="1" stop-color="#b4b8aa"/></linearGradient>
 </defs>
 <path d="M597 284 L625 298 L625 306.5 L597 292 Z" fill="#a9ada0"/>
 <path d="M625 298 L658 268 L658 277 L625 306.5 Z" fill="#74786d"/>
 <path d="M597 284 L637 257 L658 268 L625 298 Z" fill="url(#mn)" stroke="#7e8278" stroke-width="1"/>
 <path d="M597 288 L625 302" stroke="#8a8e82" stroke-width=".8"/>
 <path d="M606 285 L636 263 L650 270 L623 294 Z" fill="#c9cdc2" stroke="#8d9186" stroke-width=".8"/>
 <ellipse cx="620" cy="283" rx="6" ry="4" fill="#f4f4f0" opacity=".9"/>
 <ellipse cx="643" cy="266" rx="5" ry="3" fill="#f4f4f0" opacity=".8"/>
 <path d="M617 270 L626 264.5 L649 277 L648 285 L640 287 Z" fill="#a5d521"/>
 <path d="M640 287 L648 279 L648 285 L641 290 Z" fill="#7fae12"/>
 <path d="M619 270 L626 266 L646 277 L641 282 Z" fill="#bde53c" opacity=".8"/>
</g>
<g>
 <defs>
  <linearGradient id="nb" x1="0" y1="0" x2=".8" y2="1"><stop offset="0" stop-color="#fbbd42"/><stop offset=".5" stop-color="#f4a238"/><stop offset="1" stop-color="#ea8a2c"/></linearGradient>
  <linearGradient id="nb2" x1="0" y1="0" x2="1" y2="0"><stop offset="0" stop-color="#e9b47a"/><stop offset=".5" stop-color="#f7d5a2"/><stop offset="1" stop-color="#f4b458"/></linearGradient>
 </defs>
 <rect x="727" y="248" width="78" height="69.5" fill="url(#nb)"/>
 <rect x="727" y="248" width="9" height="69.5" fill="url(#nb2)"/>
 <rect x="727" y="248" width="1.5" height="69.5" fill="#a8754a"/>
 <rect x="801" y="252" width="4" height="62" fill="#f6cf98" opacity=".85"/>
 <rect x="728" y="315.5" width="76" height="2" fill="#c98a5a" opacity=".8"/>
 <path d="M805 248 L799 248 L805 254 Z" fill="#cfe08a" opacity=".8"/>
 <g fill="#3a3230">
  <ellipse cx="732.5" cy="261" rx="3" ry="2"/><ellipse cx="732.5" cy="275.5" rx="3" ry="2"/>
  <ellipse cx="732.5" cy="290" rx="3" ry="2"/><ellipse cx="732.5" cy="305" rx="3" ry="2"/>
 </g>
 <g stroke="#b9a89a" stroke-width="2" stroke-linecap="round">
  <path d="M723 262.5 L730 261.5"/><path d="M723 277 L730 276"/><path d="M723 291.5 L730 290.5"/>
 </g>
 <path d="M722.5 306 L730 305.5" stroke="#66707c" stroke-width="2" stroke-linecap="round"/>
</g>
<g>
 <defs>
  <linearGradient id="cb" x1="0" y1="0" x2="0" y2="1"><stop offset="0" stop-color="#c9c9c9"/><stop offset="1" stop-color="#aeaeae"/></linearGradient>
  <linearGradient id="cd" x1="0" y1="0" x2="1" y2="0"><stop offset="0" stop-color="#c2c2c2"/><stop offset="1" stop-color="#9d9d9d"/></linearGradient>
 </defs>
 <rect x="864" y="237" width="68.5" height="90" rx="3.5" fill="#7b7b7b"/>
 <rect x="865" y="268" width="66.5" height="55" fill="url(#cb)"/>
 <rect x="864.5" y="237.5" width="67.5" height="31" rx="3" fill="#3d3d3d"/>
 <rect x="864.5" y="262" width="67.5" height="6.5" fill="#353535"/>
 <rect x="866" y="239" width="64" height="4" fill="#555" opacity=".7"/>
 <rect x="870" y="247" width="58" height="17" fill="url(#cd)"/>
 <rect x="865" y="268.5" width="66.5" height="1.5" fill="#d9d9d9"/>
 <rect x="866" y="321" width="65" height="4" fill="#9a9a9a"/><rect x="870.5" y="272" width="9" height="10" rx="1" fill="#2b2b2d"/><rect x="882.5" y="272" width="9" height="10" rx="1" fill="#9a9f9f"/><rect x="894" y="272" width="9" height="10" rx="1" fill="#9a9f9f"/><rect x="905.5" y="272" width="9" height="10" rx="1" fill="#9a9f9f"/><rect x="917.5" y="272" width="9" height="10" rx="1" fill="#2b2b2d"/><rect x="870.5" y="284.5" width="9" height="10" rx="1" fill="#2b2b2d"/><rect x="882.5" y="284.5" width="9" height="10" rx="1" fill="#9a9f9f"/><rect x="894" y="284.5" width="9" height="10" rx="1" fill="#9a9f9f"/><rect x="905.5" y="284.5" width="9" height="10" rx="1" fill="#9a9f9f"/><rect x="917.5" y="284.5" width="9" height="10" rx="1" fill="#2b2b2d"/><rect x="870.5" y="297" width="9" height="10" rx="1" fill="#2b2b2d"/><rect x="882.5" y="297" width="9" height="10" rx="1" fill="#9a9f9f"/><rect x="894" y="297" width="9" height="10" rx="1" fill="#9a9f9f"/><rect x="905.5" y="297" width="9" height="10" rx="1" fill="#9a9f9f"/><rect x="917.5" y="297" width="9" height="22.5" rx="1" fill="#2b2b2d"/><rect x="870.5" y="309.5" width="9" height="10" rx="1" fill="#e0262a"/><rect x="882.5" y="309.5" width="9" height="10" rx="1" fill="#9a9f9f"/><rect x="894" y="309.5" width="9" height="10" rx="1" fill="#9a9f9f"/><rect x="905.5" y="309.5" width="9" height="10" rx="1" fill="#2b2b2d"/><text x="898" y="262.5" font-family="Liberation Mono, monospace" font-weight="700" font-size="17" fill="#3a3a3a" textLength="30" lengthAdjust="spacingAndGlyphs">250</text></g>
<g>
 <defs>
  <linearGradient id="rg1" x1="0" y1="0" x2="0" y2="1"><stop offset="0" stop-color="#d6e6f4"/><stop offset="1" stop-color="#a9c7e2"/></linearGradient>
  <linearGradient id="rg2" x1="0" y1="0" x2="1" y2="1"><stop offset="0" stop-color="#9bbad6"/><stop offset="1" stop-color="#7397bd"/></linearGradient>
  <linearGradient id="rg3" x1="0" y1="0" x2="1" y2="0"><stop offset="0" stop-color="#efe39a"/><stop offset="1" stop-color="#f2cf72"/></linearGradient>
 </defs>
 <path d="M988 293 L1032 304 L1032 318 L988 309 Z" fill="url(#rg1)"/>
 <path d="M1032 304 L1074 279 L1074 294 L1032 318 Z" fill="url(#rg2)"/>
 <path d="M988 293 L1000 283 L1016 272 L1058 282 L1074 279 L1032 304 Z" fill="#d8d8d4"/>
 <path d="M990 292 L1014 276 L1040 282 L1030 298 Z" fill="#e2e2de"/>
 <path d="M1008 274 L1026 258 L1068 262 L1071 276 L1056 288 L1040 284 Z" fill="url(#rg3)"/>
 <path d="M1056 262 L1070 262 L1072 278 L1058 290 Z" fill="#eec668"/>
 <path d="M1020 268 L1050 270 L1054 276 L1022 274 Z" fill="#5b5a52"/>
 <path d="M1028 244 L1048 243 L1050 258 L1030 258 Z" fill="#f2f2f2"/>
 <ellipse cx="1050" cy="248" rx="4" ry="3.5" fill="#b9bcc6"/>
 <rect x="1043" y="256" width="5" height="4" fill="#555"/>
 <g fill="#f5f5f5" opacity=".9"><rect x="1010" y="280" width="4" height="2.5"/><rect x="1016" y="282" width="4" height="2.5"/><rect x="1022" y="284" width="4" height="2.5"/><rect x="1013" y="286" width="4" height="2.5"/><rect x="1019" y="288" width="4" height="2.5"/></g>
 <path d="M1026 284 L1040 286 L1036 296 L1024 292 Z" fill="#c5d6c0" opacity=".8"/>
</g></svg>
<svg width="1366" height="768" viewBox="0 0 1366 768" style="left:0;top:0;"><rect x="26.5" y="73.5" width="28" height="30" fill="#fdfdfd" stroke="#e4e4e4"/><path d="M35.5 82.5 H43 L47.5 87 V96.5 H35.5 Z" fill="#fff" stroke="#8a8a8a"/><path d="M40 89 H48 V96.5 H40 Z" fill="#f6b26b"/><path d="M40 91.5 H48 M40 94 H48" stroke="#fbe0c0" stroke-width=".8"/><path d="M62.5 135.8 H67.5 L65 138.6 Z" fill="#666"/><path d="M103 77 L99 86 H103 L100 94 L108 83 H104 L107 77 Z" fill="#e2e2e2"/><rect x="108" y="80" width="15" height="5" fill="#9c9c9c"/><rect x="108" y="85" width="5" height="19" fill="#9c9c9c"/><rect x="112" y="88" width="14" height="5" fill="#a8a8a8"/><rect x="112.5" y="93.5" width="18" height="15" fill="#fbf2f4" stroke="#bdbdbd"/><rect x="112" y="93" width="19" height="4" fill="#ababab"/><path d="M121.5 97 V108 M113 101 H130 M113 105 H130" stroke="#e2c4cc" fill="none"/><path d="M136.5 137.3 H141.5 L139 140.1 Z" fill="#b0b0b0"/><rect x="147.5" y="77.5" width="15" height="13" fill="#f5f5f5" stroke="#b4b4b4"/><rect x="147" y="77" width="16" height="3" fill="#9c9c9c"/><rect x="147.5" y="101.5" width="15" height="14" fill="#f6f6f6" stroke="#b4b4b4"/><rect x="147" y="101" width="16" height="4" fill="#9c9c9c"/><path d="M152.5 105 V115 M157.5 105 V115 M147 110.5 H163" stroke="#c6c6c6" fill="none"/><path d="M149.5 125.500 H157 L161.500 130 V140.500 H149.500 Z" fill="#f7f7f7" stroke="#b4b4b4"/><circle cx="158.500" cy="137" r="4" fill="#f1f1f1" stroke="#b4b4b4"/><path d="M291.500 80 V103 M295.500 80 V103 M299.500 80 V103" stroke="#b4b4b4" fill="none"/><path d="M303.500 80.500 H312 L317.500 86 V105.500 H303.500 Z" fill="#f6f6f6" stroke="#b4b4b4"/><path d="M292 103.500 H304" stroke="#b4b4b4"/><circle cx="313" cy="99" r="6.5" fill="#f1f1f1" stroke="#b0b0b0" stroke-width="2.2"/><path d="M316 92 L321 96 L315 98 Z" fill="#b0b0b0"/><path d="M315.5 137.3 H320.5 L318 140.1 Z" fill="#b0b0b0"/><rect x="336.500" y="77.500" width="15" height="13" fill="#f6f6f6" stroke="#b4b4b4"/><rect x="336" y="77" width="16" height="3" fill="#b4b4b4"/><path d="M340 85 H348 M344 82 V88" stroke="#9c9c9c" stroke-width="1.500"/><rect x="336.500" y="102.500" width="15" height="14" fill="#f6f6f6" stroke="#b4b4b4"/><rect x="336" y="101" width="16" height="3.500" fill="#9c9c9c"/><path d="M340 108 H342 M344 108 H349 M340 112 H342 M344 112 H349" stroke="#9c9c9c" stroke-width="1.500"/><path d="M338.500 126.500 H346 L350.500 131 V141.500 H338.500 Z" fill="#f6f6f6" stroke="#b4b4b4"/><circle cx="342" cy="137" r="3.500" fill="none" stroke="#b4b4b4" stroke-width="1.500"/><path d="M456 83 V98 M462.500 83 V97 M459.500 94 L462.500 98.5 L465.500 94" stroke="#b4b4b4" stroke-width="1.600" fill="none"/><path d="M454 85 H458 M454 92 H458" stroke="#c6c6c6" stroke-width="1.500"/><path d="M456 115 V130 M462.500 115 V129 M459.500 126 L462.500 130.5 L465.500 126" stroke="#b4b4b4" stroke-width="1.600" fill="none"/><path d="M454 117 H458 M454 124 H458" stroke="#c6c6c6" stroke-width="1.500"/><path d="M456 131 V135 M462.500 130 V135" stroke="#c6c6c6" stroke-width="1.600"/><rect x="480" y="79" width="29" height="25.500" fill="#f3eef4" stroke="#a9a9a9" stroke-width="1.400"/><rect x="480" y="78.500" width="29" height="2.500" fill="#a9a9a9"/><path d="M494.500 80 V104" stroke="#b9b9b9" stroke-width="1.400"/><rect x="481" y="81" width="13" height="22.500" fill="#ead9ee" opacity=".8"/><path d="M483.500 84 H490.500 L483.500 91 H490.500 M483.500 102 L487 94 L490.500 102 M485 99.500 H489" stroke="#b7a9ba" stroke-width="1.300" fill="none"/><path d="M498.500 91 L502 83 L505.500 91 M500 88.500 H504 M498.500 95 H505.500 L498.500 102 H505.500" stroke="#b3b3b3" stroke-width="1.300" fill="none"/><path d="M534 77 H561 L549.93 89.6 V105 H545.07 V89.6 Z" fill="#b3b3b3"/><rect x="573" y="77" width="11" height="2.5" fill="#9c9c9c"/><path d="M574 80 H583 L579.5 85 V90 H577.5 V85 Z" fill="#b4b4b4"/><rect x="573" y="101" width="11" height="2.5" fill="#9c9c9c"/><path d="M574 104 H583 L579.5 109 V114 H577.5 V109 Z" fill="#b4b4b4"/><rect x="573" y="125" width="11" height="2.5" fill="#9c9c9c"/><path d="M574 128 H583 L579.5 133 V138 H577.5 V133 Z" fill="#b4b4b4"/><path d="M582 86 L587 91 M587 86 L582 91" stroke="#c6c6c6" stroke-width="1.300"/><path d="M582 113 a3 3 0 1 0 4 -3" stroke="#c6c6c6" stroke-width="1.300" fill="none"/><path d="M581 140 L587 133" stroke="#c6c6c6" stroke-width="1.600"/><rect x="698.500" y="88.500" width="15" height="15" fill="#f7f7f7" stroke="#b4b4b4"/><path d="M701 92 H712 M701 95 H712 M701 98 H712 M701 101 H712" stroke="#b4b4b4" stroke-width="1.200"/><rect x="717.500" y="88.500" width="12" height="14" fill="#f7f7f7" stroke="#b4b4b4"/><rect x="717" y="88" width="13" height="3.500" fill="#9c9c9c"/><path d="M719 94.500 H729 M719 97.500 H729 M719 100.500 H729" stroke="#b4b4b4" stroke-width="1.200"/><path d="M708 84 Q715 76 722 83" stroke="#b4b4b4" stroke-width="1.800" fill="none"/><path d="M719 81 L725 82 L722 87 Z" fill="#b4b4b4"/><rect x="746.500" y="77.500" width="14" height="13" fill="#f8f8f8" stroke="#c6c6c6"/><path d="M749 81 H760 M749 84.500 H760 M749 88 H760" stroke="#b4b4b4" stroke-width="1.300"/><rect x="747" y="101" width="4" height="15" fill="#9c9c9c"/><rect x="757" y="101" width="4" height="15" fill="#b4b4b4"/><path d="M751 108.500 H757" stroke="#b4b4b4" stroke-width="1.500"/><rect x="746.500" y="126.500" width="14" height="5" fill="#f8f8f8" stroke="#c6c6c6"/><rect x="746.500" y="134.500" width="14" height="5" fill="#f8f8f8" stroke="#c6c6c6"/><path d="M752 129 L755 132 L760 126" stroke="#b4b4b4" stroke-width="1.300" fill="none"/><path d="M877.5 131.8 H882.5 L880 134.6 Z" fill="#c9c9c9"/><rect x="890" y="77" width="4" height="15" fill="#b4b4b4"/><path d="M890 80.500 H894 M890 84.500 H894 M890 88.500 H894" stroke="#f1f1f1"/><path d="M896 85 H900 M902 82 H906 V88 H902 Z" stroke="#c6c6c6" fill="none" stroke-width="1.200"/><path d="M890 105 H897 V113 M890 105 V113 M893.500 105 V113" stroke="#b4b4b4" fill="none" stroke-width="1.300"/><rect x="899.500" y="100.500" width="5" height="5" fill="#f6f6f6" stroke="#b4b4b4"/><rect x="899.500" y="110.500" width="5" height="5" fill="#f6f6f6" stroke="#b4b4b4"/><path d="M902 106 V110" stroke="#b4b4b4"/><path d="M890.500 127.500 L897 124.500 L904.500 127.500 V139.500 L897 142 L890.500 139.500 Z" fill="#f4f4f4" stroke="#b4b4b4"/><path d="M894 128 V140 M897.500 128 V141 M901 128 V140" stroke="#b4b4b4" stroke-width="1.200"/><rect x="1097.5" y="80.5" width="25" height="23" fill="#f4f4f4" stroke="#cdbfc4"/><path d="M1103.5 80 V104 M1110.5 80 V104 M1117.5 80 V104 M1097 88.5 H1123 M1097 96.5 H1123 " stroke="#cdbfc4" fill="none" opacity=".8"/><rect x="1097" y="80" width="26" height="5" fill="#e6dde0" opacity=".9"/><text x="1111" y="108" font-family="Liberation Sans, sans-serif" font-weight="700" font-size="25" fill="#b2b2b2">?</text><path d="M1136.5 137.3 H1141.5 L1139 140.1 Z" fill="#c4c4c4"/><rect x="1154.500" y="80.500" width="27" height="19" fill="#f6edf0" stroke="#c9b9be" stroke-width="1.300"/><path d="M1157 96 L1162 88 L1166 93 L1172 85 L1178 82" stroke="#b5b5b5" stroke-width="1.800" fill="none"/><path d="M1174 81 H1180 V87" stroke="#b5b5b5" stroke-width="1.500" fill="none"/><path d="M1155 102.500 H1181 M1158 105.500 H1176" stroke="#c4c4c4" stroke-width="1.400"/><rect x="1208.5" y="78.5" width="14" height="13" fill="#f4f4f4" stroke="#b4b4b4"/><path d="M1212.5 78 V92 M1216.5 78 V92 M1219.5 78 V92 M1208 83.5 H1223 M1208 87.5 H1223 " stroke="#b4b4b4" fill="none" opacity=".8"/><rect x="1208" y="76" width="15" height="2.500" fill="#c6c6c6"/><rect x="1208.5" y="103.5" width="14" height="12" fill="#f4f4f4" stroke="#b4b4b4"/><path d="M1212.5 103 V116 M1216.5 103 V116 M1219.5 103 V116 M1208 107.5 H1223 M1208 112.5 H1223 " stroke="#b4b4b4" fill="none" opacity=".8"/><rect x="1208" y="101" width="15" height="2.500" fill="#c6c6c6"/><rect x="1208.5" y="126.5" width="14" height="14" fill="#f4f4f4" stroke="#b4b4b4"/><path d="M1212.5 126 V141 M1216.5 126 V141 M1219.5 126 V141 M1208 130.5 H1223 M1208 134.5 H1223 M1208 137.5 H1223 " stroke="#b4b4b4" fill="none" opacity=".8"/><path d="M1208 126.500 H1223" stroke="#9c9c9c" stroke-width="1.500"/><path d="M1280.5 82.8 H1285.5 L1283 85.6 Z" fill="#cfcfcf"/><path d="M1297.5 106.8 H1302.5 L1300 109.6 Z" fill="#cfcfcf"/><path d="M1313 79 L1319 79 M1320.500 76 V92" stroke="#c6c6c6" stroke-width="1.300" fill="none"/><path d="M1311 80 L1316 77 V83 Z" fill="#c6c6c6"/><path d="M1313 104 L1319 104 M1320.500 101 V117" stroke="#c6c6c6" stroke-width="1.300" fill="none"/><path d="M1311 105 L1316 102 V108 Z" fill="#c6c6c6"/><path d="M1321 154 H1327 V160 M1323.500 156.500 L1327 160" stroke="#bdbdbd" stroke-width="1.200" fill="none"/><path d="M1347.500 159 L1351.500 155 L1355.500 159" stroke="#777" stroke-width="1.800" fill="none"/></svg>
<svg width="1366" height="768" viewBox="0 0 1366 768" style="left:0;top:0;"><path d="M23 11 H35 V25 H23 Z" fill="none" stroke="#fff" stroke-width="1.600"/><path d="M25.500 11 V16.500 H32.500 V11 M26 25 V20 H32 V25" fill="none" stroke="#fff" stroke-width="1.500"/><path d="M53 15.500 H60 a4.300 4.300 0 0 1 0 8.600 H57" fill="none" stroke="#fff" stroke-width="2"/><path d="M50.500 15.500 L56.500 10.500 V20.500 Z" fill="#fff"/><path d="M71 15.500 H76 L73.500 18.500 Z" fill="#fff"/><g opacity=".28"><path d="M99 15.500 H93 a4.300 4.300 0 0 0 0 8.600 H96" fill="none" stroke="#fff" stroke-width="2"/><path d="M101.500 15.500 L95.500 10.500 V20.500 Z" fill="#fff"/><path d="M106 15.500 H111 L108.500 18.500 Z" fill="#fff"/><circle cx="128" cy="12.500" r="3.500" fill="#fff"/><path d="M122 27 V21 a6 5 0 0 1 12 0 V27 Z" fill="#fff"/></g><path d="M153 14.500 H159" stroke="#fff" stroke-width="1.500"/><path d="M152.500 17.500 H159.500 L156 21 Z" fill="#fff"/><rect x="1199" y="10.500" width="13" height="11.500" fill="none" stroke="#fff" stroke-width="1.400"/><path d="M1199 13.500 H1212" stroke="#fff" stroke-width="1.400"/><path d="M1205.500 20 V16 M1203.500 17.500 L1205.500 15.500 L1207.500 17.500" stroke="#fff" stroke-width="1.200" fill="none"/><path d="M1245 16.500 H1256" stroke="#fff" stroke-width="1.300"/><rect x="1292.500" y="13.500" width="8" height="8" fill="none" stroke="#fff" stroke-width="1.300"/><path d="M1295 13.500 V11 H1303 V19 H1300.500" fill="none" stroke="#fff" stroke-width="1.300"/><path d="M1337 10.500 L1349.500 22.500 M1349.500 10.500 L1337 22.500" stroke="#fff" stroke-width="1.300"/><circle cx="1276" cy="49.500" r="4" fill="none" stroke="#fff" stroke-width="1.500"/><path d="M1269.500 62 V60 a6.500 6 0 0 1 10 -4" fill="none" stroke="#fff" stroke-width="1.500"/><path d="M1281.500 56 V62 M1278.500 59 H1284.500" stroke="#fff" stroke-width="1.400"/><path d="M679.500 57 V55 a4.600 4.800 0 1 1 5 0 V57 Z" fill="none" stroke="#fff" stroke-width="1.200"/><path d="M680 59.500 H684" stroke="#fff" stroke-width="1.200"/><path d="M93.500 188.500 H100.500 L97 192.500 Z" fill="#777"/><g fill="#c4c4c4"><rect x="122" y="185" width="2" height="2"/><rect x="122" y="190" width="2" height="2"/><rect x="122" y="195" width="2" height="2"/></g><path d="M151.500 187 L160.500 196 M160.500 187 L151.500 196" stroke="#5e5e5e" stroke-width="1.800"/><path d="M186.500 192 L190.500 196.500 L198 186.500" stroke="#5e5e5e" stroke-width="2" fill="none"/><path d="M1349 189 L1353 193 L1357 189" stroke="#666" stroke-width="1.600" fill="none"/><path d="M22 217.500 V232 H9 Z" fill="#b4b4b4"/><path d="M1281 394.500 H1285.500 V399 H1290 V403.500 H1285.500 V408 H1281 V403.500 H1276.500 V399 H1281 Z" fill="#fff" stroke="#111" stroke-width="1.500" stroke-linejoin="round"/><path d="M32 726 L27 730 L32 734 Z" fill="#cfcfcf"/><path d="M56 725.500 L61 730 L56 734.500 Z" fill="#555"/><circle cx="1088.500" cy="730" r="7" fill="none" stroke="#777" stroke-width="1.200"/><path d="M1084.500 730 H1092.500 M1088.500 726 V734" stroke="#777" stroke-width="1.300"/><g fill="#c9c9c9"><rect x="1116" y="724" width="2" height="2"/><rect x="1116" y="729" width="2" height="2"/><rect x="1116" y="734" width="2" height="2"/></g><path d="M1351.500 227 L1355 223 L1358.500 227 Z" fill="#666"/><path d="M1351.500 706 L1355 710 L1358.500 706 Z" fill="#555"/><path d="M1143.500 726.500 L1139.500 730.500 L1143.500 734.500 Z" fill="#555"/><path d="M1334 726 L1338.500 730.500 L1334 735 Z" fill="#444"/><rect x="79.500" y="750.500" width="12" height="11" fill="#f8f8f8" stroke="#777"/><rect x="79" y="750" width="13" height="3" fill="#777"/><circle cx="81" cy="750" r="2" fill="#555"/><path d="M82 756.500 H90 M82 759 H90" stroke="#999"/><rect x="1092.500" y="750.500" width="12" height="11" fill="none" stroke="#666"/><path d="M1096.500 750 V762 M1100.500 750 V762 M1092 754.500 H1105 M1092 758.500 H1105" stroke="#666"/><rect x="1130.500" y="750.500" width="13" height="11" fill="none" stroke="#777"/><path d="M1134.500 752 V761 M1137.500 752 V761 M1140.500 752 V761" stroke="#888"/><rect x="1169.500" y="750.500" width="13" height="11" fill="none" stroke="#666"/><path d="M1173.500 750 V757.500 H1179.500 V750" stroke="#666" fill="none"/><path d="M1198 756.500 H1205" stroke="#555" stroke-width="1.500"/><path d="M1210 756.500 H1308" stroke="#b5b5b5" stroke-width="1"/><rect x="1258" y="751" width="3" height="11" fill="#d0d0d0"/><path d="M1311.500 756.500 H1319.500 M1315.500 752.500 V760.500" stroke="#444" stroke-width="1.600"/></svg>
<span class="t" style="font-size:15px;color:#4a4a4a;font-weight:700;font-style:italic;top:181.2px;left:223.5px;font-family:"Liberation Serif",serif;">f</span>
<span class="t" style="font-size:10px;color:#4a4a4a;font-weight:700;font-style:italic;top:183.6px;left:229.0px;font-family:"Liberation Serif",serif;">x</span>
<svg width="1366" height="768" viewBox="0 0 1366 768" style="left:0;top:0;"><defs>
 <linearGradient id="wg" x1="0" y1="0" x2="0" y2="1"><stop offset="0" stop-color="#a8dc7a"/><stop offset=".5" stop-color="#6cc24a"/><stop offset="1" stop-color="#b4e08c"/></linearGradient>
 <radialGradient id="ws" cx=".6" cy=".45" r=".8"><stop offset="0" stop-color="#9fd6f4"/><stop offset=".6" stop-color="#5fa6df"/><stop offset="1" stop-color="#4c8fd0"/></radialGradient>
 <linearGradient id="wk" x1="0" y1="0" x2="0" y2="1"><stop offset="0" stop-color="#dedede"/><stop offset="1" stop-color="#a9a9a9"/></linearGradient>
</defs><path d="M1161.7 624.5 Q1157.2 628.0 1161.7 631.5" fill="none" stroke="url(#wg)" stroke-width="5.5" stroke-linecap="round" opacity="0.95"/><path d="M1150.4 619.0 Q1144.0 628.0 1150.4 637.0" fill="none" stroke="url(#wg)" stroke-width="6" stroke-linecap="round" opacity="0.95"/><path d="M1139.2 613.0 Q1130.7 628.0 1139.2 643.0" fill="none" stroke="url(#wg)" stroke-width="6" stroke-linecap="round" opacity="0.9"/><path d="M1127.0 607.0 Q1116.4 628.0 1127.0 649.0" fill="none" stroke="url(#wg)" stroke-width="6.5" stroke-linecap="round" opacity="0.85"/><path d="M1113.6 602.0 Q1101.3 628.0 1113.6 654.0" fill="none" stroke="url(#wg)" stroke-width="7" stroke-linecap="round" opacity="0.8"/><path d="M1227.3 624.5 Q1231.8 628.0 1227.3 631.5" fill="none" stroke="url(#wg)" stroke-width="5.5" stroke-linecap="round" opacity="0.95"/><path d="M1238.6 619.0 Q1245.0 628.0 1238.6 637.0" fill="none" stroke="url(#wg)" stroke-width="6" stroke-linecap="round" opacity="0.95"/><path d="M1249.8 613.0 Q1258.3 628.0 1249.8 643.0" fill="none" stroke="url(#wg)" stroke-width="6" stroke-linecap="round" opacity="0.9"/><path d="M1262.0 607.0 Q1272.6 628.0 1262.0 649.0" fill="none" stroke="url(#wg)" stroke-width="6.5" stroke-linecap="round" opacity="0.85"/><path d="M1275.4 602.0 Q1287.7 628.0 1275.4 654.0" fill="none" stroke="url(#wg)" stroke-width="7" stroke-linecap="round" opacity="0.8"/><rect x="1168" y="605.500" width="53" height="41" rx="1.500" fill="#9c9c9c"/><rect x="1170" y="608" width="49" height="35.500" fill="url(#ws)"/><rect x="1186" y="647" width="17" height="6" fill="#e6e6e6"/><ellipse cx="1194.500" cy="653" rx="13" ry="2" fill="#cfe6ee"/><path d="M1172 656 H1217 L1221 668 H1168 Z" fill="url(#wk)"/><rect x="1168" y="665" width="53" height="3.500" fill="#9a9a9a"/></svg>
<span style="position:absolute;white-space:nowrap;font-weight:700;line-height:44px;height:44px;transform-origin:0 0;-webkit-text-stroke:1.2px;left:1101px;top:673px;font-size:44px;color:#5c6c8e;transform:scale(.405,1);opacity:.95;">EXPERTO</span>
<span style="position:absolute;white-space:nowrap;font-weight:700;line-height:44px;height:44px;transform-origin:0 0;-webkit-text-stroke:1.2px;left:1191px;top:677px;font-size:40px;color:#d8d8d8;transform:scale(.47,1);text-shadow:0 2px 3px rgba(40,40,40,.75),0 0 2px rgba(90,90,90,.8);">digital</span>
<span style="position:absolute;white-space:nowrap;font-weight:700;line-height:44px;height:44px;transform-origin:0 0;-webkit-text-stroke:1.2px;left:1250px;top:673px;font-size:44px;color:#5c6c8e;transform:scale(.405,1);opacity:.95;">.NET</span>
</div>
</body>
</html>
